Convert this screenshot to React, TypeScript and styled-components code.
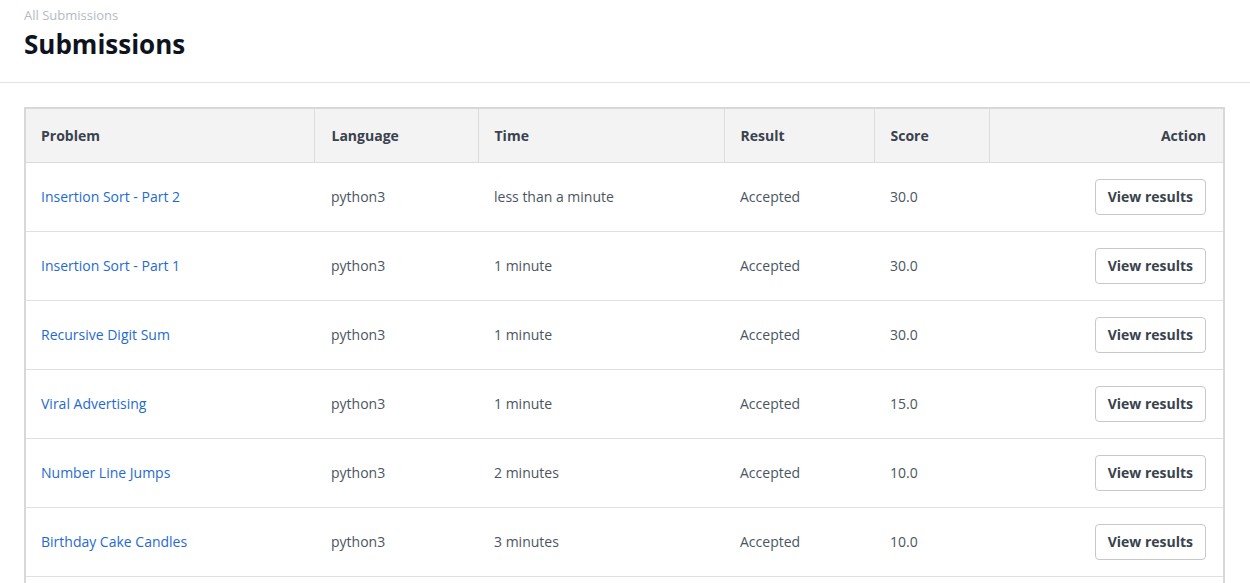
import React from "react";
import styled, { createGlobalStyle } from "styled-components";

const Global = createGlobalStyle`
  html, body { margin: 0; padding: 0; background: #fff; }
  body { font-family: "Open Sans", "Noto Sans", Arial, sans-serif; color: #39424e; }
  * { box-sizing: border-box; }
`;

const Page = styled.div`
  width: 1250px;
`;

const Header = styled.header`
  height: 83px;
  padding: 6px 24px 0;
  border-bottom: 1px solid #e4e4e4;
`;

const Crumb = styled.div`
  font-size: 13px;
  line-height: 18px;
  color: #b3bbbf;
`;

const Title = styled.h1`
  margin: 2px 0 0;
  font-size: 26px;
  line-height: 36px;
  font-weight: 700;
  color: #0e141e;
`;

const Main = styled.main`
  padding: 24px 26px 0 24px;
`;

const Table = styled.table`
  width: 1199px;
  border-collapse: collapse;
  border: 2px solid #d8d8d8;
  border-bottom: none;
  table-layout: fixed;
  font-size: 14px;
`;

const Th = styled.th<{ $w: number; $right?: boolean }>`
  width: ${(p) => p.$w}px;
  height: 54px;
  padding: 0 16px;
  background: #f3f3f3;
  border-bottom: 1px solid #dcdcdc;
  border-right: 1px solid #dcdcdc;
  text-align: ${(p) => (p.$right ? "right" : "left")};
  font-weight: 700;
  color: #39424e;
  &:first-child { padding-left: 15px; }
  &:nth-child(2) { padding-left: 17px; }
  &:last-child { border-right: none; padding-right: 17px; }
`;

const Tr = styled.tr`
  height: 69px;
  border-bottom: 1px solid #e0e0e0;
`;

const Td = styled.td<{ $right?: boolean }>`
  padding: 0 16px;
  color: #4b5562;
  text-align: ${(p) => (p.$right ? "right" : "left")};
  vertical-align: middle;
  &:first-child { padding-left: 15px; }
  &:nth-child(2) { padding-left: 17px; }
  &:last-child { padding-right: 17px; }
`;

const ProblemLink = styled.a`
  color: #1f6ad1;
  text-decoration: none;
`;

const Button = styled.button`
  height: 36px;
  padding: 0 12px;
  border: 1px solid #c8c8c8;
  border-radius: 4px;
  background: #fff;
  font-family: inherit;
  font-size: 14px;
  font-weight: 700;
  color: #39424e;
  cursor: pointer;
`;

const rows = [
  ["Insertion Sort - Part 2", "python3", "less than a minute", "Accepted", "30.0"],
  ["Insertion Sort - Part 1", "python3", "1 minute", "Accepted", "30.0"],
  ["Recursive Digit Sum", "python3", "1 minute", "Accepted", "30.0"],
  ["Viral Advertising", "python3", "1 minute", "Accepted", "15.0"],
  ["Number Line Jumps", "python3", "2 minutes", "Accepted", "10.0"],
  ["Birthday Cake Candles", "python3", "3 minutes", "Accepted", "10.0"],
  ["Grading Students", "python3", "4 minutes", "Accepted", "10.0"],
];

export default function App() {
  return (
    <Page>
      <Global />
      <Header>
        <Crumb>All Submissions</Crumb>
        <Title>Submissions</Title>
      </Header>
      <Main>
        <Table>
          <thead>
            <tr>
              <Th $w={289}>Problem</Th>
              <Th $w={164}>Language</Th>
              <Th $w={246}>Time</Th>
              <Th $w={150}>Result</Th>
              <Th $w={115}>Score</Th>
              <Th $w={235} $right>Action</Th>
            </tr>
          </thead>
          <tbody>
            {rows.map((r) => (
              <Tr key={r[0]}>
                <Td><ProblemLink href="#">{r[0]}</ProblemLink></Td>
                <Td>{r[1]}</Td>
                <Td>{r[2]}</Td>
                <Td>{r[3]}</Td>
                <Td>{r[4]}</Td>
                <Td $right><Button>View results</Button></Td>
              </Tr>
            ))}
          </tbody>
        </Table>
      </Main>
    </Page>
  );
}
